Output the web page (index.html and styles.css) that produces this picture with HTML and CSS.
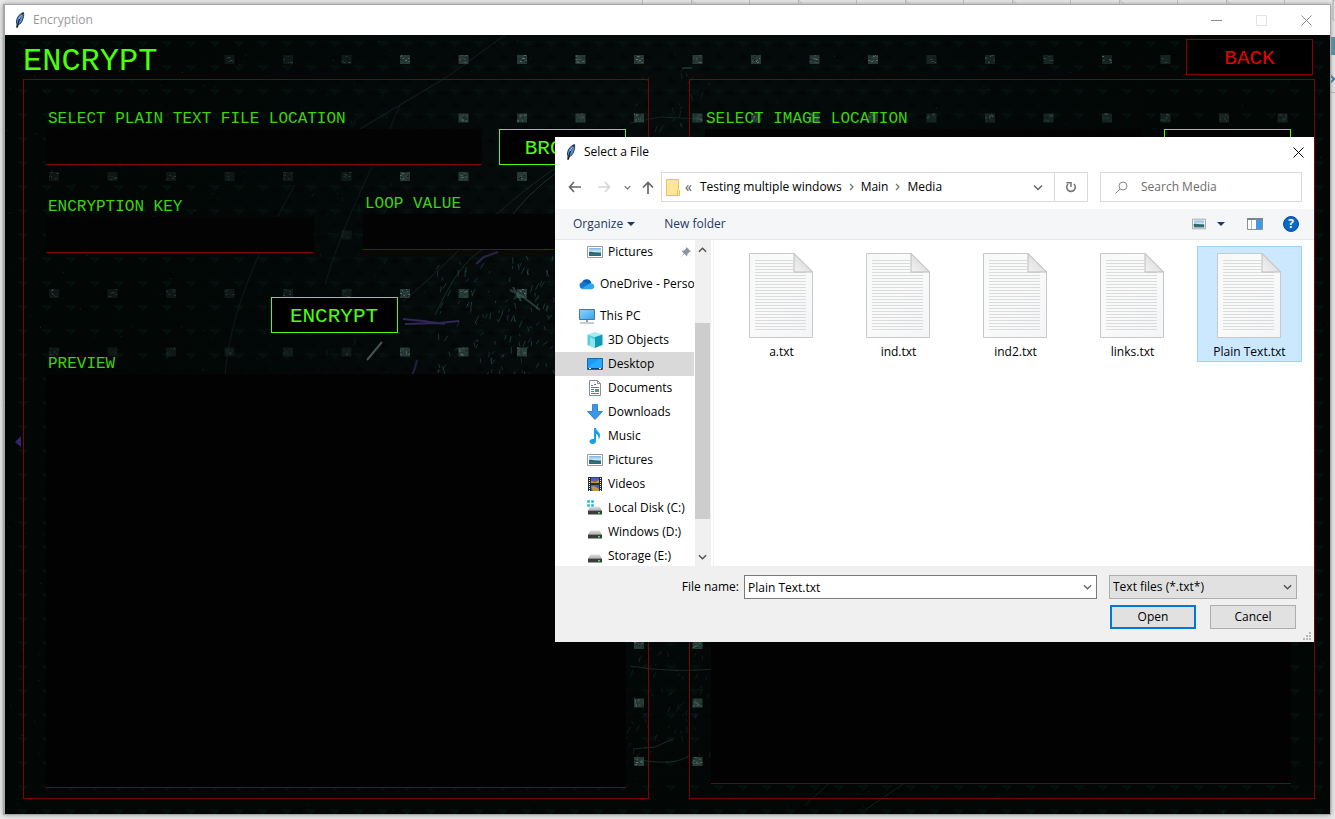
FILE: index.html
```html
<!DOCTYPE html>
<html lang="en">
<head>
<meta charset="utf-8">
<title>Encryption</title>
<link rel="stylesheet" href="styles.css">
</head>
<body>
<svg class="defs" aria-hidden="true">
  <defs>
    <linearGradient id="paper" x1="0" y1="0" x2="1" y2="1"><stop offset="0" stop-color="#f7f9f9"/><stop offset=".5" stop-color="#fafafa"/><stop offset="1" stop-color="#f3f5f7"/></linearGradient>
    <linearGradient id="fold" x1="0" y1="1" x2="1" y2="0"><stop offset="0" stop-color="#f4f4f4"/><stop offset="1" stop-color="#cfcfcf"/></linearGradient>
    <linearGradient id="sky" x1="0" y1="0" x2="0" y2="1"><stop offset="0" stop-color="#7db5ea"/><stop offset=".5" stop-color="#d7ecf8"/><stop offset=".6" stop-color="#3c7d8c"/><stop offset="1" stop-color="#2b5f9e"/></linearGradient>
    <linearGradient id="screen" x1="0" y1="0" x2="1" y2="1"><stop offset="0" stop-color="#8fd6ff"/><stop offset="1" stop-color="#2fa4ee"/></linearGradient>
    <linearGradient id="drivetop" x1="0" y1="0" x2="0" y2="1"><stop offset="0" stop-color="#dedede"/><stop offset="1" stop-color="#aeb0b2"/></linearGradient>
    <pattern id="rules" width="51" height="3" patternUnits="userSpaceOnUse"><path d="M0 1.500H51" stroke="#d9dbdc"/></pattern>
    <pattern id="weave" width="24" height="24" patternUnits="userSpaceOnUse"><path d="M0 12 6 6l6 6zM12 24l6-6 6 6z" fill="#000" opacity=".3"/><path d="M12 6h12l-6 6z" fill="#0b1d1b" opacity=".3"/></pattern>
  </defs>
  <symbol id="i-feather" viewBox="0 0 10 16"><path d="M8.500.5C5.500 1.300 2.500 4.500 1.800 7.500c-.5 2-.5 3 .2 4.500L1.800 15.500 3.200 12.500C5.500 12 7 10 7.400 8 8.500 6 9 3 8.500.5z" fill="#5a93d8" stroke="#1b2430" stroke-width=".9"/><path d="M7.800 1.500C5 5 3.300 8.500 2.400 15.500" stroke="#101820" stroke-width="1.200" fill="none"/><path d="M6.800 2.700 4 7" stroke="#a9d0f7"/></symbol>
  <symbol id="i-pictures" viewBox="0 0 16 16"><path d="M.5 2.500h15v11H.5z" fill="#fff" stroke="#9b9b9b"/><path d="M2 4h12v8H2z" fill="url(#sky)"/><path d="M2 8c3-1 5 1 12 1v1c-6 1-9-1-12 0z" fill="#2e6b55"/></symbol>
  <symbol id="i-onedrive" viewBox="0 0 16 16"><path d="M3 6.500a5 5 0 0 1 9.500.5L5 12z" fill="#0a5fb5"/><path d="M3 6.200C5 5.500 7 6 9 7.500L14 13H3.500a3.500 3.500 0 0 1-.5-6.800z" fill="#1177d1"/><path d="M2 12.900 9 8.500A4.500 4.500 0 0 1 13 7.500a2.900 2.900 0 0 1 0 5.700H3z" fill="#2da7ec"/></symbol>
  <symbol id="i-pc" viewBox="0 0 16 16"><path d="M.5 1.500h15v10H.5z" fill="url(#screen)" stroke="#4d7790"/><path d="M7 12h2v2H7zM1 14.500h14v1H1z" fill="#8d9aa5"/></symbol>
  <symbol id="i-cube" viewBox="0 0 16 16"><path d="M8 0l7.500 2.500L8 5 .5 2.500z" fill="#a8eaf0"/><path d="M.5 2.500 8 5v11L.5 13z" fill="#54cfdf"/><path d="M15.500 2.500 8 5v11l7.500-3z" fill="#0e9bb0"/><path d="M3 5l5 3v8l-5-2z" fill="#8be4ee"/></symbol>
  <symbol id="i-desktop" viewBox="0 0 16 16"><path d="M.5 2.500h15v11H.5z" fill="#149cf8" stroke="#1269b0"/><path d="M1 11 12 3h3v9H1z" fill="#2ba8ff"/><path d="M1 12.500h14" stroke="#0a3d74"/><path d="M2 12.500h2M12 12.500h2" stroke="#fff"/></symbol>
  <symbol id="i-doc" viewBox="0 0 16 16"><path d="M2.500.5h8l3 3v12h-11z" fill="#fff" stroke="#8d8d8d"/><path d="M10.500.5v3h3" fill="none" stroke="#8d8d8d"/><path d="M4 5.500h2M7 4.500h2M4 7.500h8M4 9.500h3M4 11.500h3M4 13.500h8" stroke="#3a82c4"/><path d="M8 9h4v3H8z" fill="#4a9c92"/></symbol>
  <symbol id="i-down" viewBox="0 0 16 16"><path d="M5.500.5h5v7h5L8 15.500.5 7.500h5z" fill="#3b97e8" stroke="#1e72bd" stroke-width=".8"/></symbol>
  <symbol id="i-music" viewBox="0 0 16 16"><path d="M7 0h2c0 3 4 3.500 4 7.500 0 1.500-.5 3-1.500 4 .5-3-.5-4.500-2.500-5.500v7c0 2-1.500 3-3.500 3S2.500 15 2.500 13.500 4 11 5.500 11H7z" fill="#14a0f0"/></symbol>
  <symbol id="i-video" viewBox="0 0 16 16"><path d="M1 1h14v14H1z" fill="#2a2a2c"/><path d="M4 1.500h8V7H4zM4 9h8v6H4z" fill="#3a66cc"/><path d="M4 5l4 1 4-2v3H4zM4 11l3-1 5 3v2H6z" fill="#c9992f"/><path d="M7 3h2v3H7z" fill="#c84838"/><path d="M2.500 2v13M13.500 2v13" stroke="#fff" stroke-dasharray="1 1"/></symbol>
  <symbol id="i-drive" viewBox="0 0 16 16"><path d="M3.500 6.500h9l2.500 4H1z" fill="url(#drivetop)"/><path d="M1 10.500h14v4H1z" fill="#3b3c3e"/><path d="M11 12h2v1.500h-2z" fill="#43e052"/></symbol>
  <symbol id="i-osdrive" viewBox="0 0 16 16"><use href="#i-drive"/><path d="M0 0h3v3H0zM4 0h3v3H4zM0 4h3v3H0zM4 4h3v3H4z" fill="#0fb2f2" stroke="#fff" stroke-width=".5"/></symbol>
  <symbol id="i-page" viewBox="0 0 64 85"><path d="M.5.5H45L63.500 19v65.500H.5z" fill="url(#paper)" stroke="#c6c8c9"/><path d="M6 6h38v13h13v60H6z" fill="url(#rules)"/><path d="M45 .5V19h18.500z" fill="url(#fold)" stroke="#bcbcbc"/></symbol>
  <symbol id="i-chev" viewBox="0 0 10 6"><path d="M1 1l4 4 4-4" fill="none" stroke="currentColor" stroke-width="1.500"/></symbol>
  <symbol id="i-close" viewBox="0 0 11 11"><path d="M.5.5l10 10M10.500.5l-10 10" stroke="currentColor" fill="none"/></symbol>
  <symbol id="i-sep" viewBox="0 0 5 8"><path d="M1 1l3 3-3 3" fill="none" stroke="#777" stroke-width="1.300"/></symbol>
</svg>

<svg class="backdrop" id="backdrop" aria-hidden="true"></svg>

<main class="window">
  <header class="titlebar">
    <svg class="feather"><use href="#i-feather"/></svg>
    <span class="titlebar-text">Encryption</span>
    <button class="winbtn" aria-label="Minimize"><svg width="11" height="11"><path d="M0 5.500h11" stroke="currentColor"/></svg></button>
    <button class="winbtn winbtn-off" aria-label="Maximize" disabled><svg width="11" height="11"><path d="M.5.5h10v10H.5z" fill="none" stroke="currentColor"/></svg></button>
    <button class="winbtn" aria-label="Close"><svg width="11" height="11"><use href="#i-close"/></svg></button>
  </header>

  <div class="app">
    <svg class="texture" id="texture" aria-hidden="true"></svg>
    <div class="app-head">
      <h1 class="app-title">ENCRYPT</h1>
      <button class="lcd-btn lcd-btn-red">BACK</button>
    </div>
    <div class="panels">
      <section class="panel panel-text">
        <label class="lcd-label" for="src">SELECT PLAIN TEXT FILE LOCATION</label>
        <div class="row">
          <input class="field" id="src" type="text">
          <button class="lcd-btn">BROWSE</button>
        </div>
        <div class="pair">
          <div class="pair-key"><label class="lcd-label" for="key">ENCRYPTION KEY</label><input class="field" id="key" type="text"></div>
          <div><label class="lcd-label" for="loop">LOOP VALUE</label><input class="field" id="loop" type="text"></div>
        </div>
        <button class="lcd-btn encrypt">ENCRYPT</button>
        <label class="lcd-label" for="preview">PREVIEW</label>
        <textarea class="preview" id="preview"></textarea>
      </section>
      <section class="panel panel-image">
        <label class="lcd-label" for="img">SELECT IMAGE LOCATION</label>
        <div class="row row-wide">
          <input class="field" id="img" type="text">
          <button class="lcd-btn" aria-label="Browse image"></button>
        </div>
        <textarea class="preview preview-image" aria-label="Image preview"></textarea>
      </section>
    </div>
  </div>
</main>

<div class="dialog" role="dialog" aria-label="Select a File">
  <header class="dlg-title">
    <svg class="feather"><use href="#i-feather"/></svg>
    <span class="dlg-title-text">Select a File</span>
    <button class="dlg-close" aria-label="Close"><svg width="11" height="11"><use href="#i-close"/></svg></button>
  </header>
  <div class="nav">
    <button class="icon-btn" aria-label="Back"><svg width="13" height="12"><path d="M6 1 1.500 6 6 11M2 6h11" fill="none" stroke="#666" stroke-width="1.600"/></svg></button>
    <button class="icon-btn nav-fwd" aria-label="Forward"><svg width="13" height="12"><path d="M7 1l4.500 5L7 11M11 6H0" fill="none" stroke="#d5d5d5" stroke-width="1.600"/></svg></button>
    <button class="icon-btn nav-recent" aria-label="Recent locations"><svg width="7" height="5"><use href="#i-chev"/></svg></button>
    <button class="icon-btn nav-up" aria-label="Up"><svg width="12" height="13"><path d="M1 6.500 6 1.500l5 5M6 2v11" fill="none" stroke="#666" stroke-width="1.700"/></svg></button>
    <div class="address">
      <svg width="14" height="17"><path d="M.5.5h12v10l1 1v5H.5z" fill="#ffe699" stroke="#e8c34d"/><path d="M11.500 11v5" stroke="#e8c34d"/></svg>
      <span class="crumb-more">«</span>
      <a class="crumb" href="#">Testing multiple windows</a>
      <svg class="sep" width="5" height="8"><use href="#i-sep"/></svg>
      <a class="crumb" href="#">Main</a>
      <svg class="sep" width="5" height="8"><use href="#i-sep"/></svg>
      <a class="crumb" href="#">Media</a>
      <button class="icon-btn address-drop" aria-label="Previous locations"><svg width="10" height="7"><use href="#i-chev"/></svg></button>
      <button class="icon-btn refresh" aria-label="Refresh"><svg width="12" height="12"><path d="M3 3A4.300 4.300 0 1 0 9 3" fill="none" stroke="#777" stroke-width="1.600"/><path d="M1.500 1.700H6V6" fill="none" stroke="#777" stroke-width="1.500"/></svg></button>
    </div>
    <div class="search">
      <svg width="13" height="13"><circle cx="8" cy="5" r="4" fill="none" stroke="#8a8a98"/><path d="M5 8 .5 12.500" stroke="#8a8a98"/></svg>
      <input class="search-input" type="search" placeholder="Search Media" aria-label="Search Media">
    </div>
  </div>
  <div class="toolbar">
    <button class="tool">Organize <svg width="8" height="4"><path d="M0 0h8L4 4z" fill="#1f3864"/></svg></button>
    <button class="tool tool-new">New folder</button>
    <button class="icon-btn" aria-label="View"><svg width="14" height="14"><use href="#i-pictures"/></svg></button>
    <button class="icon-btn tool-more" aria-label="More views"><svg width="8" height="4"><path d="M0 0h8L4 4z" fill="#1f3864"/></svg></button>
    <button class="icon-btn tool-pane" aria-label="Preview pane"><svg width="16" height="12"><path d="M.5.5h15v11H.5z" fill="#fff" stroke="#8a8f94"/><path d="M0 1h16" stroke="#7e8388" stroke-width="2"/><path d="M4.500 2v9" stroke="#b5b8bb"/><path d="M9 2h6v9H9z" fill="#3f9ae5"/></svg></button>
    <button class="help" aria-label="Help">?</button>
  </div>
  <div class="dlg-body">
    <nav class="side">
      <a class="item" href="#"><svg><use href="#i-pictures"/></svg>Pictures<svg class="pin" viewBox="0 0 11 11"><path d="M6.500 0 11 4.500 9.500 5 7.500 7 7 9.500 4.500 7 .5 10.500 4 6.500 1.500 4 4 3.500 6 1.500z" fill="#8b97a3"/></svg></a>
      <a class="item item-top" href="#"><svg><use href="#i-onedrive"/></svg>OneDrive - Personal</a>
      <a class="item item-top" href="#"><svg><use href="#i-pc"/></svg>This PC</a>
      <a class="item" href="#"><svg><use href="#i-cube"/></svg>3D Objects</a>
      <a class="item item-on" href="#"><svg><use href="#i-desktop"/></svg>Desktop</a>
      <a class="item" href="#"><svg><use href="#i-doc"/></svg>Documents</a>
      <a class="item" href="#"><svg><use href="#i-down"/></svg>Downloads</a>
      <a class="item" href="#"><svg><use href="#i-music"/></svg>Music</a>
      <a class="item" href="#"><svg><use href="#i-pictures"/></svg>Pictures</a>
      <a class="item" href="#"><svg><use href="#i-video"/></svg>Videos</a>
      <a class="item" href="#"><svg><use href="#i-osdrive"/></svg>Local Disk (C:)</a>
      <a class="item" href="#"><svg><use href="#i-drive"/></svg>Windows (D:)</a>
      <a class="item" href="#"><svg><use href="#i-drive"/></svg>Storage (E:)</a>
    </nav>
    <div class="scroll" aria-hidden="true">
      <svg class="flip" width="9" height="6"><use href="#i-chev"/></svg>
      <div class="thumb"></div>
      <svg width="9" height="6"><use href="#i-chev"/></svg>
    </div>
    <div class="files">
      <button class="file"><svg><use href="#i-page"/></svg>a.txt</button>
      <button class="file"><svg><use href="#i-page"/></svg>ind.txt</button>
      <button class="file"><svg><use href="#i-page"/></svg>ind2.txt</button>
      <button class="file"><svg><use href="#i-page"/></svg>links.txt</button>
      <button class="file file-on"><svg><use href="#i-page"/></svg>Plain Text.txt</button>
    </div>
  </div>
  <footer class="dlg-foot">
    <div class="foot-row">
      <label class="foot-label" for="fname">File name:</label>
      <div class="combo">
        <input class="combo-input" id="fname" type="text" value="Plain Text.txt">
        <button class="icon-btn combo-drop" aria-label="File name history"><svg width="9" height="6"><use href="#i-chev"/></svg></button>
      </div>
      <div class="type">
        <select class="type-select" aria-label="File type"><option>Text files (*.txt*)</option></select>
        <svg class="type-chev" width="9" height="6"><use href="#i-chev"/></svg>
      </div>
    </div>
    <div class="foot-row foot-actions">
      <button class="btn btn-main">Open</button>
      <button class="btn">Cancel</button>
    </div>
    <svg class="grip" width="8" height="8"><path d="M6 0h2v2H6zM3 3h2v2H3zM6 3h2v2H6zM0 6h2v2H0zM3 6h2v2H3zM6 6h2v2H6z" fill="#b8b8b8"/></svg>
  </footer>
</div>
<script src="texture.js"></script>
</body>
</html>
```

FILE: styles.css
```css
* { box-sizing: border-box; }

body {
  margin: 0;
  height: 100vh;
  padding: 4px 4px 4px 3px;
  background: #e9e9e9;
  position: relative;
  overflow: hidden;
  font: 12px/16px "Open Sans", "Noto Sans", sans-serif;
  color: #000;
}

button, input, select, textarea {
  font: inherit;
  color: inherit;
  margin: 0;
  border: 0;
  border-radius: 0;
  outline: 0;
}
button { padding: 0; background: none; }
a { color: inherit; text-decoration: none; }
svg { display: block; flex: none; }

.defs { position: absolute; width: 0; height: 0; }
.backdrop { position: absolute; inset: 0; width: 100%; height: 100%; }

/* main window */
.window {
  position: relative;
  display: flex;
  flex-direction: column;
  height: 100%;
  border: 1px solid #a6a6a6;
  border-left-width: 2px;
  box-shadow: 0 0 5px #999;
  background: #fff;
}
.titlebar {
  display: flex;
  align-items: center;
  height: 30px;
  padding: 0 1px 0 10px;
  color: #999;
}
.feather { width: 10px; height: 16px; margin-right: 8px; }
.titlebar-text { flex: 1; }
.winbtn { width: 45px; height: 28px; display: grid; place-items: center; color: #8a8a8a; }
.winbtn-off { color: #e3e3e3; }

.app {
  position: relative;
  flex: 1;
  display: flex;
  flex-direction: column;
  min-height: 0;
  padding: 0 15px 15px 18px;
  background: radial-gradient(circle at 50% 30%, #050d0c, #020706 60%);
  font-family: "Liberation Mono", monospace;
  color: #4dff0a;
}
.texture { position: absolute; inset: 0; width: 100%; height: 100%; }
.app-head {
  position: relative;
  display: flex;
  justify-content: space-between;
  align-items: center;
  height: 44px;
  padding: 0 2px 0 0;
}
.app-title { margin: 0; padding-top: 10px; font-size: 32px; line-height: 34px; font-weight: 400; }
.lcd-btn {
  width: 127px;
  height: 36px;
  padding-top: 4px;
  border: 1px solid #4dff0a;
  background: #000;
  font-size: 21px;
  line-height: 30px;
}
.lcd-btn-red { border-color: #8b0000; color: #e60000; }

.panels {
  position: relative;
  flex: 1;
  display: grid;
  grid-template-columns: 1fr 1fr;
  gap: 40px;
  min-height: 0;
}
.panel { display: flex; flex-direction: column; min-width: 0; border: 1px solid #780404; }
.panel-text { padding: 30px 22px 10px; }
.panel-image { padding: 30px 23px 14px 15px; }
.lcd-label { display: block; padding-left: 2px; margin-bottom: 1px; font-size: 16px; line-height: 18px; color: #3fd40a; }
.panel-image .lcd-label { padding-left: 1px; }
.row { display: flex; gap: 17px; }
.row-wide { gap: 23px; }
.field {
  display: block;
  width: 100%;
  height: 36px;
  padding: 0 6px;
  border-bottom: 1px solid #8b0000;
  background: #030303;
}
.row .field { flex: 1; min-width: 0; }
.pair { display: grid; grid-template-columns: 268px 1fr; gap: 49px; margin-top: 30px; }
.pair-key { padding-top: 3px; }
.encrypt { align-self: center; margin: 44px 4px 22px 0; }
.preview {
  flex: 1;
  resize: none;
  border-bottom: 1px solid #780404;
  background: #020202;
}
.preview-image { margin: 30px 0 0 6px; }

/* file dialog, floats over the main window */
.dialog {
  position: absolute;
  top: 137px;
  right: 21px;
  width: 759px;
  display: flex;
  flex-direction: column;
  background: #fff;
}
.icon-btn { display: grid; place-items: center; color: #666; }
.dlg-title { display: flex; align-items: center; height: 30px; padding: 0 10px 0 11px; }
.dlg-title-text { flex: 1; }
.dlg-close { display: grid; place-items: center; }
.nav { display: flex; align-items: center; height: 42px; padding: 0 12px 2px 13px; }
.nav-fwd { margin-left: 17px; }
.nav-recent { margin-left: 13px; }
.nav-up { margin: 0 7px 0 11px; }
.address {
  flex: 1;
  display: flex;
  align-items: center;
  height: 30px;
  padding-left: 4px;
  border: 1px solid #d9d9d9;
}
.crumb-more { margin: 0 8px 0 5px; font-size: 14px; color: #555; }
.sep { margin: 0 7px; }
.address-drop { margin-left: auto; width: 32px; }
.refresh { width: 33px; height: 28px; border-left: 1px solid #d9d9d9; }
.search {
  display: flex;
  align-items: center;
  width: 202px;
  height: 30px;
  margin-left: 12px;
  padding-left: 14px;
  gap: 13px;
  border: 1px solid #d9d9d9;
}
.search-input { flex: 1; min-width: 0; padding: 0; background: none; }
.search-input::placeholder { color: #6d6d6d; opacity: 1; }
.toolbar {
  display: flex;
  align-items: center;
  height: 31px;
  padding: 0 15px 0 18px;
  border-bottom: 1px solid #e6e7e8;
  background: #f5f6f7;
  color: #1f3864;
}
.tool { display: flex; align-items: center; gap: 4px; }
.tool-new { margin: 0 auto 0 29px; }
.tool-more { margin-left: 11px; }
.tool-pane { margin: 0 20px 0 22px; }
.help {
  width: 16px;
  height: 16px;
  border-radius: 50%;
  background: #0667c4;
  border: 1px solid #0b4e96;
  color: #fff;
  font-weight: 700;
  line-height: 14px;
}

.dlg-body { display: flex; height: 326px; }
.side { width: 140px; overflow: hidden; }
.item {
  display: flex;
  align-items: center;
  gap: 5px;
  width: 139px;
  height: 24px;
  padding-left: 32px;
  overflow: hidden;
  white-space: nowrap;
}
.item svg { width: 16px; height: 16px; }
.item .pin { width: 11px; height: 11px; margin-left: auto; margin-right: 3px; }
.item-top { margin-top: 8px; padding-left: 24px; }
.item-on { background: #d9d9d9; }
.scroll {
  display: flex;
  flex-direction: column;
  align-items: center;
  width: 16px;
  padding: 7px 1px 6px 0;
  background: #f0f0f0;
  color: #505050;
}
.flip { transform: scaleY(-1); }
.thumb { width: 15px; height: 196px; margin: 70px 0 auto; background: #cdcdcd; }
.files {
  flex: 1;
  display: flex;
  align-items: flex-start;
  gap: 12px;
  margin-left: 2px;
  padding: 6px 12px 0 15px;
  border-left: 1px solid #f2f2f2;
}
.file {
  flex: 1;
  display: flex;
  flex-direction: column;
  align-items: center;
  gap: 6px;
  height: 116px;
  padding-top: 6px;
  border: 1px solid transparent;
  white-space: nowrap;
}
.file svg { width: 64px; height: 85px; margin-right: 1px; }
.file-on { background: #cce8ff; border-color: #99d1ff; }

.dlg-foot { position: relative; padding: 9px 17px 13px; background: #f0f0f0; }
.foot-row { display: flex; align-items: center; height: 24px; }
.foot-label { flex: none; width: 172px; padding-right: 5px; text-align: right; }
.combo {
  flex: 1;
  display: flex;
  height: 24px;
  border: 1px solid #7a7a7a;
  background: #fff;
}
.combo-input { flex: 1; min-width: 0; padding: 2px 3px 0; background: none; }
.combo-drop { width: 17px; }
.type { position: relative; width: 188px; margin-left: 12px; }
.type-select {
  display: block;
  width: 100%;
  height: 24px;
  padding: 0 3px;
  appearance: none;
  border: 1px solid #adadad;
  background: #e1e1e1;
}
.type-chev { position: absolute; right: 5px; top: 9px; color: #505050; pointer-events: none; }
.foot-actions { justify-content: flex-end; gap: 14px; margin-top: 6px; padding-right: 1px; }
.btn { width: 86px; height: 24px; border: 1px solid #adadad; background: #e1e1e1; }
.btn-main { border: 2px solid #0078d7; }
.grip { position: absolute; right: 3px; bottom: 2px; }
```

FILE: texture.js
```js
// Seeded noise so that the background art is the same on every load.
let seed = 7;
const rnd = () => (seed = (seed * 16807) % 2147483647) / 2147483647;
const texture = document.getElementById("texture");
let art = "";
const rect = (x, y, w, h, fill, o) => {
  art += `<rect x="${x.toFixed(1)}" y="${y.toFixed(1)}" width="${w}" height="${h}" fill="${fill}" opacity="${o.toFixed(2)}"/>`;
};
const line = (d, stroke, o, w = 1) => {
  art += `<path d="${d}" fill="none" stroke="${stroke}" opacity="${o}" stroke-width="${w}"/>`;
};

art += '<rect width="100%" height="100%" fill="url(#weave)"/>';

// Grid of worn square studs.
for (let row = 0; row < 13; row++) {
  for (let col = 0; col < 22; col++) {
    if (row === 0 && (col < 3 || col > 19)) continue;
    if (row === 1 && col < 7) continue;
    const x = 44 + col * 58.5, y = 20 + row * 58.5;
    const edge = col < 6 ? 0.3 : col > 14 ? 0.5 : 0.9;
    rect(x, y, 10, 9, "#3c5550", 0.7 * edge);
    for (let k = 0; k < 14; k++) {
      rect(x + Math.floor(rnd() * 9), y + Math.floor(rnd() * 8), 1 + Math.round(rnd()), 1, rnd() > 0.5 ? "#6f8d84" : "#0a1413", (0.2 + rnd() * 0.5) * edge + 0.1);
    }
  }
}

// Fine dust over the whole surface.
for (let k = 0; k < 900; k++) {
  rect(rnd() * 1325, rnd() * 780, 1, 1, rnd() > 0.8 ? "#4a4080" : "#3a5f58", 0.15 + rnd() * 0.3);
}

// Short shards, dense around the burst.
const shards = (n, cx, cy, rx, ry, o) => {
  for (let k = 0; k < n; k++) {
    const x = cx + (rnd() * 2 - 1) * rx, y = cy + (rnd() * 2 - 1) * ry;
    const dx = 2 - rnd() * 6, dy = 2 + rnd() * 5;
    line(`M${x.toFixed(1)} ${y.toFixed(1)}l${dx.toFixed(1)} ${dy.toFixed(1)}`, rnd() > 0.8 ? "#4a3a80" : "#2f6259", o);
  }
};
shards(130, 490, 280, 60, 60, 0.5);
shards(30, 665, 80, 40, 50, 0.3);
shards(60, 665, 670, 40, 60, 0.25);
shards(30, 330, 200, 60, 120, 0.2);

line("M398 266C450 225 480 180 555 130", "#3c5a56", 0.3);
line("M500 190Q520 160 555 135", "#3c5a56", 0.5);
line("M430 280C445 250 460 215 500 205", "#2f6259", 0.4);
line("M220 340C225 280 250 220 290 150", "#2a3f48", 0.3);
line("M320 250C340 180 370 130 395 70", "#2a3f48", 0.3);
line("M345 100 445 40 500 0", "#2a3f48", 0.4);
line("M398 284l20 2 22 3M400 289l34-1 20-2", "#453277", 0.7, 2);
line("M471 229l8-7 14-5", "#453277", 0.6, 2);
line("M406 343l4-10 2-8", "#3a2c68", 0.6, 2);
line("M362 325l15-18", "#64756f", 0.7, 2);
line("M505 255l12 6 18 14M508 252l8 14", "#4a6c65", 0.5, 2);
line("M625 88l30-6 40 2", "#2f6259", 0.3);
line("M625 631Q665 638 710 634M628 714l22-2 18-8M630 724q40 8 55-4", "#3c5a56", 0.4);
line("M677 33h10", "#2f8f7c", 0.6);
line("M800 770l50-45M860 775l50-34", "#22332f", 0.5);
art += '<path d="M10 407l6-6v11z" fill="#34246e"/>';
texture.innerHTML = art;

// Shapes behind the main window.
let back = "";
for (let x = 642; x < 1335; x += 107) {
  back += `<path d="M${x + 0.5} 0v5M${x + 49.5} 0v5M${x + 49.5} 0l5 5" stroke="#bdbdbd" fill="none"/>`;
}
back += '<path d="M1333 0v20h3" stroke="#b5b5b5" fill="none"/><path d="M1331 37h4v18h-4z" fill="#4a87a3"/><path d="M1330 75l4 4-4 4" stroke="#1779b8" stroke-width="2" fill="none"/><path d="M1330 92.500h5" stroke="#b5b5b5"/>';
document.getElementById("backdrop").innerHTML = back;
```
